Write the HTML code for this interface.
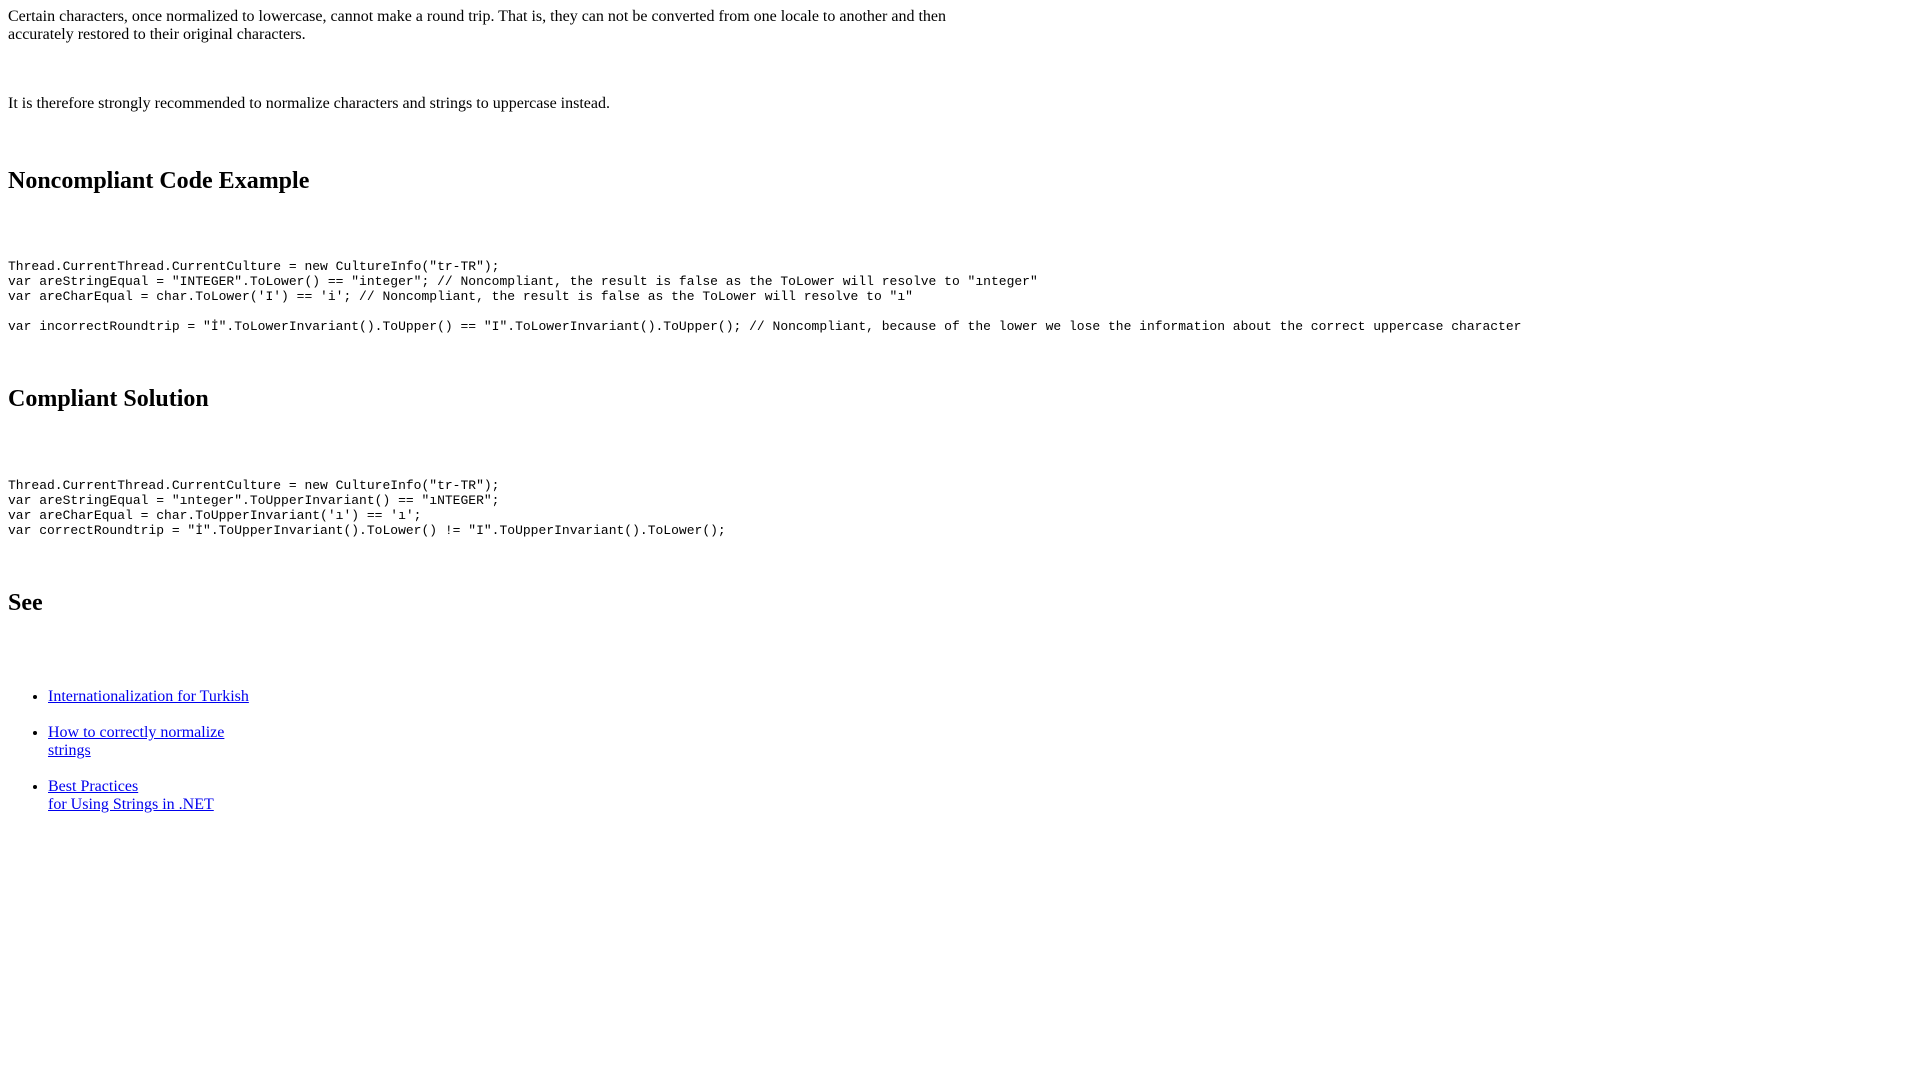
<!DOCTYPE html>
<html><head><meta charset="utf-8"><style>
html,body{margin:0;padding:0;background:#fff;width:1920px;height:1080px;overflow:hidden}
body{font-family:"Liberation Serif",serif;font-size:16px;color:#000;position:relative}
.b{position:absolute;left:8px;white-space:nowrap;line-height:18px}
h2{position:absolute;left:8px;margin:0;font-size:24px;line-height:28px;font-weight:bold;white-space:nowrap}
pre{position:absolute;left:8px;margin:0;font-family:"Liberation Mono",monospace;font-size:13px;line-height:15px}
ul{position:absolute;left:0;margin:0;padding-left:48px;line-height:18px}
li{position:absolute;left:48px;white-space:nowrap}
a{color:#00e}
</style></head><body>
<div class="b" style="top:8px">Certain characters, once normalized to lowercase, cannot make a round trip. That is, they can not be converted from one locale to another and then<br>accurately restored to their original characters.</div>
<div class="b" style="top:95px">It is therefore strongly recommended to normalize characters and strings to uppercase instead.</div>
<h2 style="top:167px">Noncompliant Code Example</h2>
<pre style="top:259px">Thread.CurrentThread.CurrentCulture = new CultureInfo("tr-TR");
var areStringEqual = "INTEGER".ToLower() == "integer"; // Noncompliant, the result is false as the ToLower will resolve to "ınteger"
var areCharEqual = char.ToLower('I') == 'i'; // Noncompliant, the result is false as the ToLower will resolve to "ı"

var incorrectRoundtrip = "İ".ToLowerInvariant().ToUpper() == "I".ToLowerInvariant().ToUpper(); // Noncompliant, because of the lower we lose the information about the correct uppercase character</pre>
<h2 style="top:385px">Compliant Solution</h2>
<pre style="top:478px">Thread.CurrentThread.CurrentCulture = new CultureInfo("tr-TR");
var areStringEqual = "ınteger".ToUpperInvariant() == "ıNTEGER";
var areCharEqual = char.ToUpperInvariant('ı') == 'ı';
var correctRoundtrip = "İ".ToUpperInvariant().ToLower() != "I".ToUpperInvariant().ToLower();</pre>
<h2 style="top:589px">See</h2>
<ul>
<li style="top:688px"><a href="#">Internationalization for Turkish</a></li>
<li style="top:724px"><a href="#">How to correctly normalize<br>strings</a></li>
<li style="top:778px"><a href="#">Best Practices<br>for Using Strings in .NET</a></li>
</ul>
</body></html>
